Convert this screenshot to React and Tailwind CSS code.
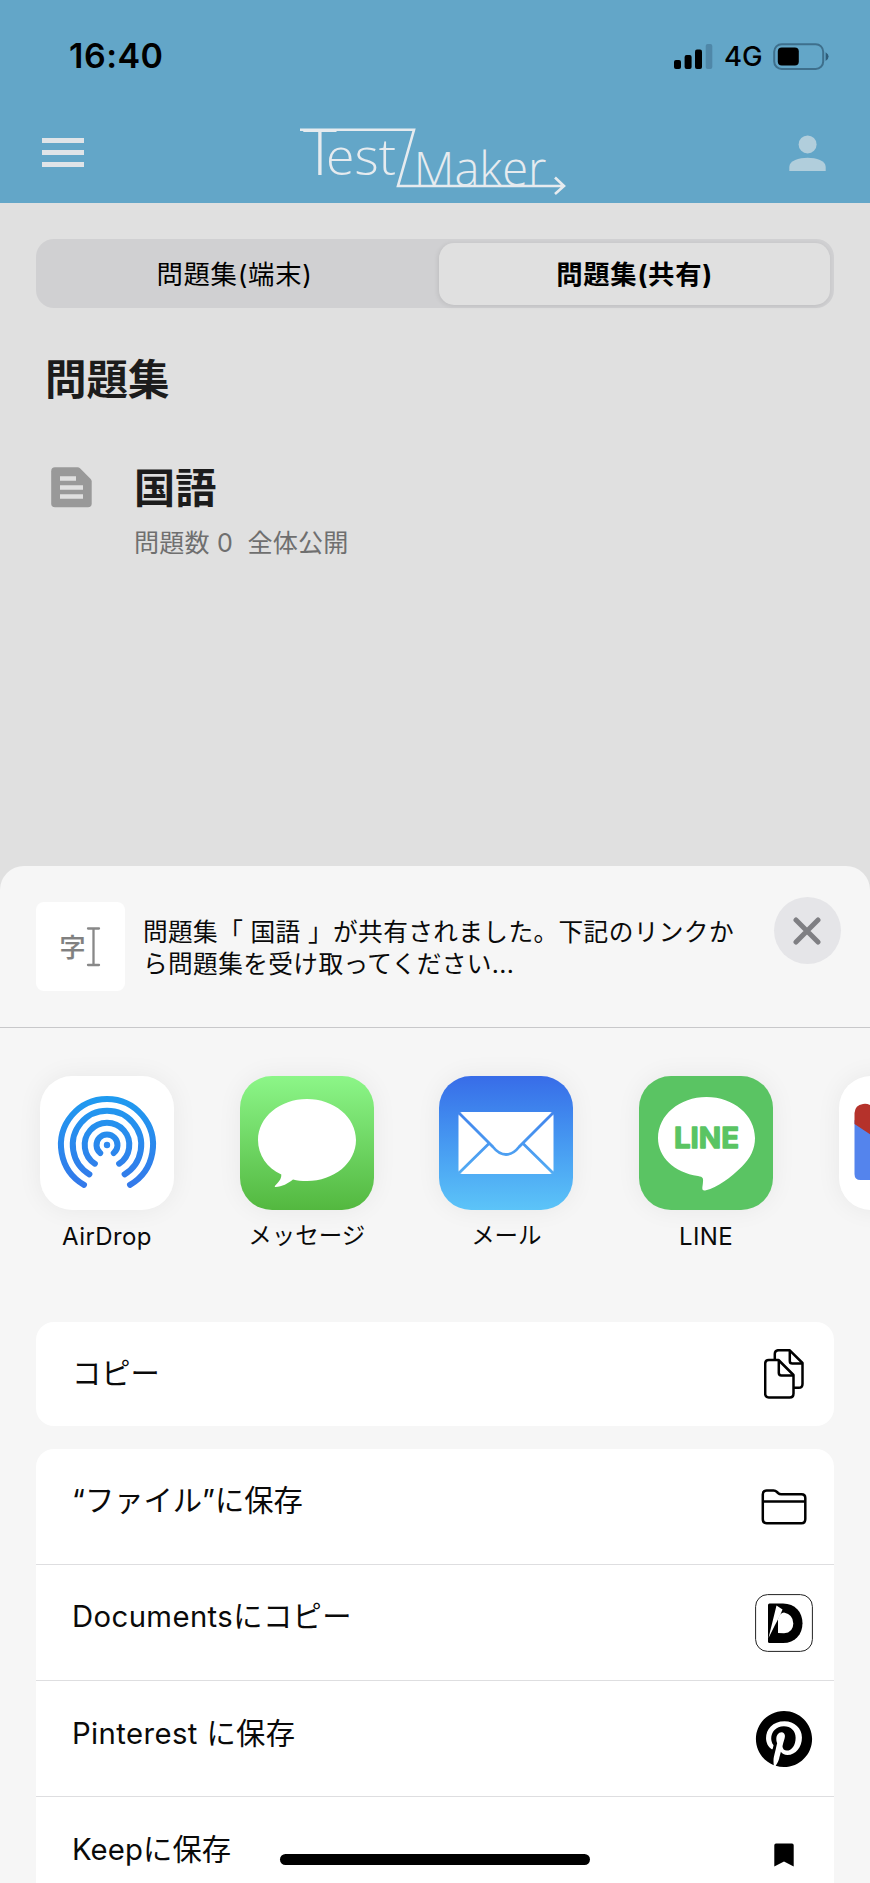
import React from "react";
import { FaPinterest } from "react-icons/fa";

function StatusBar() {
  return (
    <div className="flex h-[107px] items-start justify-between pl-[69px] pr-[41px] pt-[34px] text-black">
      <span className="text-[34px] leading-[44px] font-semibold tracking-[0.5px]">16:40</span>
      <div className="flex h-[44px] items-center">
        <svg className="h-[25px] w-[39px]" viewBox="0 0 39 25">
          <rect x="0" y="16" width="7" height="9" rx="2" />
          <rect x="10.6" y="11" width="7" height="14" rx="2" />
          <rect x="21" y="5.4" width="7" height="19.6" rx="2" />
          <rect x="31.7" y="0" width="6.6" height="25" rx="2" fill="#4f87a8" />
        </svg>
        <span className="ml-[11px] w-[37px] text-[27.500px] leading-[44px] font-medium">4G</span>
        <svg className="ml-[12px] h-[27px] w-[56px]" viewBox="0 0 56 27">
          <rect x="1.2" y="1.2" width="49" height="24.8" rx="7.5" fill="none" stroke="#3e6f8c" strokeWidth="2" />
          <rect x="4.8" y="4.6" width="21" height="18" rx="4" />
          <path d="M52.6 9.2q3 1.6 3 4.400t-3 4.400z" fill="#2f5d7a" />
        </svg>
      </div>
    </div>
  );
}

function Logo() {
  return (
    <svg className="h-[96px] w-[270px] overflow-visible" viewBox="300 107 270 96" fill="#e6ebef" stroke="#e6ebef">
      <g fontFamily="'Open Sans', 'Noto Sans', sans-serif" fontWeight="300" stroke="none">
        <text x="304" y="175" fontSize="50">
          <tspan fontSize="64.500">T</tspan>
          <tspan x="327" textLength="70" lengthAdjust="spacingAndGlyphs">est</tspan>
        </text>
        <text x="414.800" y="186" fontSize="48" textLength="132.500" lengthAdjust="spacingAndGlyphs">Maker</text>
      </g>
      <path d="M301 129.800H415L399 186H565M556 177.500L565 186L556 194" fill="none" strokeWidth="2.600" />
    </svg>
  );
}

function NavBar() {
  return (
    <div className="flex h-[96px] items-start justify-between pl-[41.500px] pr-[44px]">
      <div className="mt-[31px] flex w-[42px] flex-col gap-[7px]">
        <div className="h-[5px] bg-[#e0e4e8]" />
        <div className="h-[5px] bg-[#e0e4e8]" />
        <div className="h-[5px] bg-[#e0e4e8]" />
      </div>
      <div className="mr-[4px]">
        <Logo />
      </div>
      <svg className="mt-[28px] h-[37px] w-[37px]" viewBox="0 0 37 37" fill="#b1cedc">
        <circle cx="18.6" cy="9.4" r="9" />
        <path d="M.3 36V32C.3 25.500 10 22.800 18.600 22.800S36.700 25.500 36.700 32V36Z" />
      </svg>
    </div>
  );
}

function AppTile({ label, children, className, labelClass = "text-[23.500px]" }) {
  return (
    <div className="flex w-[134px] shrink-0 flex-col items-center">
      <div className={"h-[134px] w-[134px] overflow-hidden rounded-[32px] shadow-[0_0_26px_rgba(0,0,0,0.06)] " + className}>
        {children}
      </div>
      <span className={"mt-[10px] h-[32px] leading-[32px] whitespace-nowrap " + labelClass}>{label}</span>
    </div>
  );
}

function AirDropIcon() {
  const ring = (r, deg) => {
    const a = (deg * Math.PI) / 180;
    const dx = r * Math.sin(a);
    const dy = r * Math.cos(a);
    return `M${67 - dx} ${69 + dy}A${r} ${r} 0 1 1 ${67 + dx} ${69 + dy}`;
  };
  return (
    <svg viewBox="0 0 134 134" className="block h-full w-full">
      <defs>
        <linearGradient id="drop" gradientUnits="userSpaceOnUse" x1="0" y1="20" x2="0" y2="112">
          <stop offset="0" stopColor="#1f9bf0" />
          <stop offset="1" stopColor="#3478ea" />
        </linearGradient>
      </defs>
      <g fill="none" stroke="url(#drop)" strokeWidth="6" strokeLinecap="round">
        <path d={ring(46, 30)} />
        <path d={ring(34.2, 31)} />
        <path d={ring(22.3, 33)} />
        <path d={ring(10.5, 40)} />
      </g>
      <circle cx="67" cy="69" r="3.2" fill="#2f8af0" />
    </svg>
  );
}

function MessageIcon() {
  return (
    <svg viewBox="0 0 134 134" className="block h-full w-full">
      <path
        fill="#fff"
        d="M67 23C94 23 116 41 116 64S94 105 67 105C61.500 105 57 104.600 53 103.500C48 107.500 42 110.800 35.500 111C34.500 111 34.600 110 35.300 109.400C38.500 106.500 41.500 103 41.300 98.500C27 92 18 79 18 64C18 41 40 23 67 23Z"
      />
    </svg>
  );
}

function MailIcon() {
  return (
    <svg viewBox="0 0 134 134" className="block h-full w-full">
      <defs>
        <linearGradient id="mail" gradientUnits="userSpaceOnUse" x1="0" y1="0" x2="0" y2="134">
          <stop offset="0" stopColor="#386ce8" />
          <stop offset="1" stopColor="#5cc4f8" />
        </linearGradient>
      </defs>
      <rect x="19.500" y="36" width="95" height="62" rx="4" fill="#fff" />
      <g fill="none" stroke="url(#mail)" strokeWidth="2.8">
        <path d="M20 37L54 71C62 81 72 81 80 71L114 37" />
        <path d="M20 97L50 67.500M114 97L84 67.500" />
      </g>
    </svg>
  );
}

function LineIcon() {
  return (
    <svg viewBox="0 0 134 134" className="block h-full w-full">
      <path
        fill="#fff"
        d="M67.500 21C94.500 21 116 39 116 62C116 73 111.500 82 103 90.500C92 101.500 78 111.500 67 114.300C62 115.600 63.500 111 63.800 108C64.500 102 64.500 101 59 100C35 96.500 19 81 19 62C19 39 40.500 21 67.500 21Z"
      />
      <text
        x="35"
        y="72.200"
        fill="#5ac463"
        stroke="#5ac463"
        strokeWidth="1.300"
        strokeLinejoin="round"
        fontFamily="Inter, sans-serif"
        fontWeight="700"
        fontSize="29"
        textLength="65"
        lengthAdjust="spacingAndGlyphs"
      >
        LINE
      </text>
    </svg>
  );
}

function GmailIcon() {
  return (
    <svg viewBox="0 0 134 134" className="block h-full w-full">
      <path d="M15.500 44V98Q15.500 104 21.500 104H38V60Z" fill="#5484ed" />
      <path d="M15.500 48V37Q16 29 24 28Q30 27 36 32L67 55V82Z" fill="#b5322b" />
    </svg>
  );
}

function ActionRow({ label, children, className = "h-[116px]", labelClass = "mb-[11px]" }) {
  return (
    <div className={"flex items-center justify-between pl-[36px] pr-[21.500px] " + className}>
      <span className={"text-[29.300px] leading-[40px] whitespace-nowrap " + labelClass}>{label}</span>
      <div className="flex w-[58px] justify-center">{children}</div>
    </div>
  );
}

export default function App() {
  return (
    <div
      lang="ja"
      className="relative flex h-[1883px] w-[870px] flex-col overflow-hidden bg-[#e0e0e0] font-[Inter,'Noto_Sans_CJK_JP',sans-serif] text-[#0a0a0a]"
    >
      <header className="h-[203px] shrink-0 bg-[#63a6c8]">
        <StatusBar />
        <NavBar />
      </header>

      <main className="h-[663px] shrink-0 px-9 pt-9">
        <div className="flex h-[69px] rounded-[18px] bg-[#d0d0d2] pt-1 pr-1 pb-[3px] text-[26.400px] leading-[63px] tracking-[0.700px] text-black">
          <div className="flex-1 pr-[6px] text-center">問題集(端末)</div>
          <div className="w-[391px] rounded-[15px] bg-[#e0e0e0] text-center font-bold shadow-[-1px_1px_5px_rgba(0,0,0,0.09)]">
            問題集(共有)
          </div>
        </div>
        <h1 className="mt-[46px] pl-[9px] text-[41.500px] leading-[52px] font-bold text-[#1c1c1c]">問題集</h1>
        <div className="mt-[54px] flex pl-[15px]">
          <svg className="mt-[7px] h-[41px] w-[41px] shrink-0" viewBox="0 0 41 41">
            <path d="M4 .3H26.500Q28 .3 29 1.300L39.700 12Q40.700 13 40.700 14.500V36.500Q40.700 40.300 37 40.300H4Q.2 40.300 .2 36.500V4.300Q.2 .3 4 .3Z" fill="#999" />
            <path d="M9 9.200H25V13.700H9ZM9 18.200H32V22.700H9ZM9 27.200H32V31.700H9Z" fill="#e0e0e0" />
          </svg>
          <div className="ml-[42px]">
            <h2 className="pt-px text-[41.200px] leading-[54px] font-bold text-[#1c1c1c]">国語</h2>
            <p className="mt-[10px] text-[25.100px] leading-[36px] tracking-[0.180px] whitespace-pre text-[#6f6f6f]">問題数 0  全体公開</p>
          </div>
        </div>
      </main>

      <section className="flex h-[1017px] shrink-0 flex-col rounded-t-[24px] bg-[#f6f6f6]">
        <div className="flex h-[162px] shrink-0 items-start border-b border-[#c8c8ca] pt-[36px] pl-9">
          <div className="h-[89px] w-[89px] shrink-0 rounded-[8px] bg-white">
            <svg viewBox="0 0 89 89" className="h-full w-full" fill="none" stroke="#888" strokeWidth="2.300" strokeLinecap="round">
              <text x="23.500" y="54.500" fontSize="26" fontWeight="500" fontFamily="'Noto Sans CJK JP', sans-serif" fill="#808080" stroke="#808080" strokeWidth="0.200">字</text>
              <path d="M52 26.500H63M57.500 26.500V63M52 63H63" />
            </svg>
          </div>
          <p className="mt-[15px] ml-[18px] w-[610px] text-[24.700px] leading-[31.500px] tracking-[0.370px] whitespace-nowrap">
            問題集「 国語 」が共有されました。下記のリンクか
            <br />
            ら問題集を受け取ってください...
          </p>
          <div className="mt-[-5px] ml-[21px] flex h-[67px] w-[67px] shrink-0 items-center justify-center rounded-full bg-[#e5e5e8]">
            <svg className="mr-px h-[28px] w-[28px]" viewBox="0 0 28 28" stroke="#7f7f83" strokeWidth="5" strokeLinecap="round">
              <path d="M3 3L25 25M25 3L3 25" />
            </svg>
          </div>
        </div>

        <div className="flex h-[294px] shrink-0 gap-[65.700px] overflow-hidden pt-[48px] pl-[40px]">
          <AppTile label="AirDrop" className="bg-white" labelClass="pt-px text-[24px] tracking-[0.400px]"><AirDropIcon /></AppTile>
          <AppTile label="メッセージ" className="bg-linear-to-b from-[#8cf688] to-[#53b83f]"><MessageIcon /></AppTile>
          <AppTile label="メール" className="bg-linear-to-b from-[#386ce8] to-[#5cc4f8]"><MailIcon /></AppTile>
          <AppTile label="LINE" className="bg-[#5ac463]" labelClass="pt-px text-[24px] tracking-[0.400px]"><LineIcon /></AppTile>
          <AppTile label="" className="bg-white"><GmailIcon /></AppTile>
        </div>

        <div className="flex flex-1 flex-col gap-[23px] px-9">
          <div className="shrink-0 rounded-[18px] bg-white">
            <ActionRow label="コピー" className="h-[104px]" labelClass="mb-0">
              <svg className="h-[50px] w-[40px]" viewBox="0 0 40 50" fill="none" stroke="#000" strokeWidth="2.500" strokeLinejoin="round">
                <path d="M10.800 11V5Q10.800 1.200 14.600 1.200H25.500L38.500 14V35Q38.500 38.800 34.700 38.800H30" />
                <path d="M25.800 1.500V12Q25.800 14.600 28.400 14.600H38.500" />
                <path d="M4.800 11H14.500L29.500 26V44.500Q29.500 48.500 25.700 48.500H4.800Q1.200 48.500 1.200 44.500V14.600Q1.200 11 4.800 11Z" />
                <path d="M14.800 11.500V24Q14.800 26.400 17.400 26.400H29.500" />
              </svg>
            </ActionRow>
          </div>
          <div className="h-[434px] shrink-0 divide-y divide-[#dedee0] overflow-hidden rounded-t-[18px] bg-white">
            <ActionRow label="“ファイル”に保存">
              <svg className="h-[36px] w-[46px]" viewBox="0 0 46 36" fill="none" stroke="#000" strokeWidth="2.500" strokeLinejoin="round">
                <path d="M1.800 30V5.500Q1.800 1.500 5.800 1.500H12.500Q14.500 1.500 16 3L17 4Q18.300 5.200 20.300 5.200H40.500Q44.300 5.200 44.300 9V30Q44.300 34.300 40.500 34.300H5.800Q1.800 34.300 1.800 30Z" />
                <path d="M1.800 12.500H44.300" />
              </svg>
            </ActionRow>
            <ActionRow label="Documentsにコピー" labelClass="mb-[11px] tracking-[0.400px]">
              <svg className="h-[58px] w-[58px]" viewBox="0 0 58 58">
                <rect x=".6" y=".6" width="56.800" height="56.800" rx="12" fill="#fff" stroke="#222" />
                <path d="M14.500 9.500H28C40 9.500 47.500 18 47.500 29.200S40 49 28 49H14.500Q13 49 13 47.500V11Q13 9.500 14.500 9.500Z" fill="#000" />
                <path d="M23 39V25Q25 18.500 29 18.500Q38.300 20.500 38.300 29.500T29 39.300Z" fill="#fff" />
                <path d="M13.500 44L21.500 11.500L27.500 15.500Q25 22 19.500 32L14 43Z" fill="#fff" />
              </svg>
            </ActionRow>
            <ActionRow label="Pinterest に保存" labelClass="mb-[10px] tracking-[0.400px]">
              <FaPinterest className="h-[58px] w-[58px] text-black" />
            </ActionRow>
            <ActionRow label="Keepに保存" labelClass="mb-[10px] tracking-[0.100px]">
              <svg className="h-[24px] w-[20px]" viewBox="0 0 20 24">
                <path d="M2 .5H18Q19.700 .5 19.700 2.200V23.500L10 18.500L.3 23.500V2.200Q.3 .5 2 .5Z" fill="#000" />
              </svg>
            </ActionRow>
          </div>
        </div>
      </section>

      <div className="absolute top-[1854px] left-[280px] h-[11px] w-[310px] rounded-full bg-black" />
    </div>
  );
}
